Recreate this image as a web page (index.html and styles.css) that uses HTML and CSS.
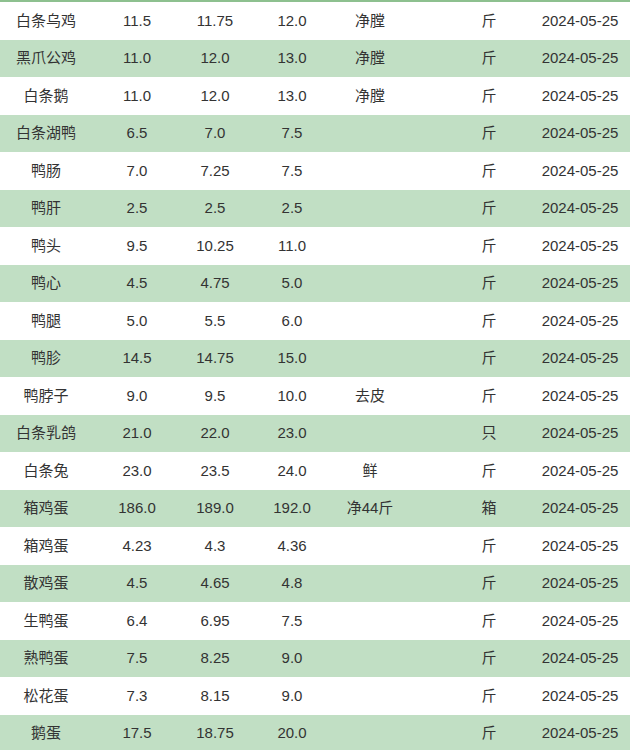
FILE: index.html
```html
<!DOCTYPE html>
<html>
<head>
<meta charset="utf-8">
<link rel="stylesheet" href="styles.css">
</head>
<body>
<table class="price-table">
<colgroup>
<col class="c1"><col class="c2"><col class="c3"><col class="c4"><col class="c5"><col class="c6"><col class="c7">
</colgroup>
<tbody>
<tr><td>白条乌鸡</td><td>11.5</td><td>11.75</td><td>12.0</td><td>净膛</td><td class="unit">斤</td><td>2024-05-25</td></tr>
<tr><td>黑爪公鸡</td><td>11.0</td><td>12.0</td><td>13.0</td><td>净膛</td><td class="unit">斤</td><td>2024-05-25</td></tr>
<tr><td>白条鹅</td><td>11.0</td><td>12.0</td><td>13.0</td><td>净膛</td><td class="unit">斤</td><td>2024-05-25</td></tr>
<tr><td>白条湖鸭</td><td>6.5</td><td>7.0</td><td>7.5</td><td></td><td class="unit">斤</td><td>2024-05-25</td></tr>
<tr><td>鸭肠</td><td>7.0</td><td>7.25</td><td>7.5</td><td></td><td class="unit">斤</td><td>2024-05-25</td></tr>
<tr><td>鸭肝</td><td>2.5</td><td>2.5</td><td>2.5</td><td></td><td class="unit">斤</td><td>2024-05-25</td></tr>
<tr><td>鸭头</td><td>9.5</td><td>10.25</td><td>11.0</td><td></td><td class="unit">斤</td><td>2024-05-25</td></tr>
<tr><td>鸭心</td><td>4.5</td><td>4.75</td><td>5.0</td><td></td><td class="unit">斤</td><td>2024-05-25</td></tr>
<tr><td>鸭腿</td><td>5.0</td><td>5.5</td><td>6.0</td><td></td><td class="unit">斤</td><td>2024-05-25</td></tr>
<tr><td>鸭胗</td><td>14.5</td><td>14.75</td><td>15.0</td><td></td><td class="unit">斤</td><td>2024-05-25</td></tr>
<tr><td>鸭脖子</td><td>9.0</td><td>9.5</td><td>10.0</td><td>去皮</td><td class="unit">斤</td><td>2024-05-25</td></tr>
<tr><td>白条乳鸽</td><td>21.0</td><td>22.0</td><td>23.0</td><td></td><td class="unit">只</td><td>2024-05-25</td></tr>
<tr><td>白条兔</td><td>23.0</td><td>23.5</td><td>24.0</td><td>鲜</td><td class="unit">斤</td><td>2024-05-25</td></tr>
<tr><td>箱鸡蛋</td><td>186.0</td><td>189.0</td><td>192.0</td><td>净44斤</td><td class="unit">箱</td><td>2024-05-25</td></tr>
<tr><td>箱鸡蛋</td><td>4.23</td><td>4.3</td><td>4.36</td><td></td><td class="unit">斤</td><td>2024-05-25</td></tr>
<tr><td>散鸡蛋</td><td>4.5</td><td>4.65</td><td>4.8</td><td></td><td class="unit">斤</td><td>2024-05-25</td></tr>
<tr><td>生鸭蛋</td><td>6.4</td><td>6.95</td><td>7.5</td><td></td><td class="unit">斤</td><td>2024-05-25</td></tr>
<tr><td>熟鸭蛋</td><td>7.5</td><td>8.25</td><td>9.0</td><td></td><td class="unit">斤</td><td>2024-05-25</td></tr>
<tr><td>松花蛋</td><td>7.3</td><td>8.15</td><td>9.0</td><td></td><td class="unit">斤</td><td>2024-05-25</td></tr>
<tr><td>鹅蛋</td><td>17.5</td><td>18.75</td><td>20.0</td><td></td><td class="unit">斤</td><td>2024-05-25</td></tr>
</tbody>
</table>
</body>
</html>
```

FILE: styles.css
```css
html, body {
  margin: 0;
  padding: 0;
  background: #ffffff;
}
body {
  font-family: "Liberation Sans", Arial, "Noto Sans CJK SC", sans-serif;
  font-size: 15px;
  color: #333333;
  overflow: hidden;
}
.price-table {
  width: 630px;
  border-collapse: collapse;
  table-layout: fixed;
  border-top: 2px solid #8dc08f;
}
.c1 { width: 92px; }
.c2 { width: 90px; }
.c3 { width: 66px; }
.c4 { width: 88px; }
.c5 { width: 68px; }
.c6 { width: 126px; }
.c7 { width: 100px; }
.price-table td {
  height: 37.5px;
  padding: 0;
  text-align: center;
  vertical-align: middle;
  white-space: nowrap;
  line-height: 18px;
}
.price-table tr:nth-child(even) td {
  background: #c1dfc4;
}
.price-table td.unit {
  padding-left: 44px;
}
```
